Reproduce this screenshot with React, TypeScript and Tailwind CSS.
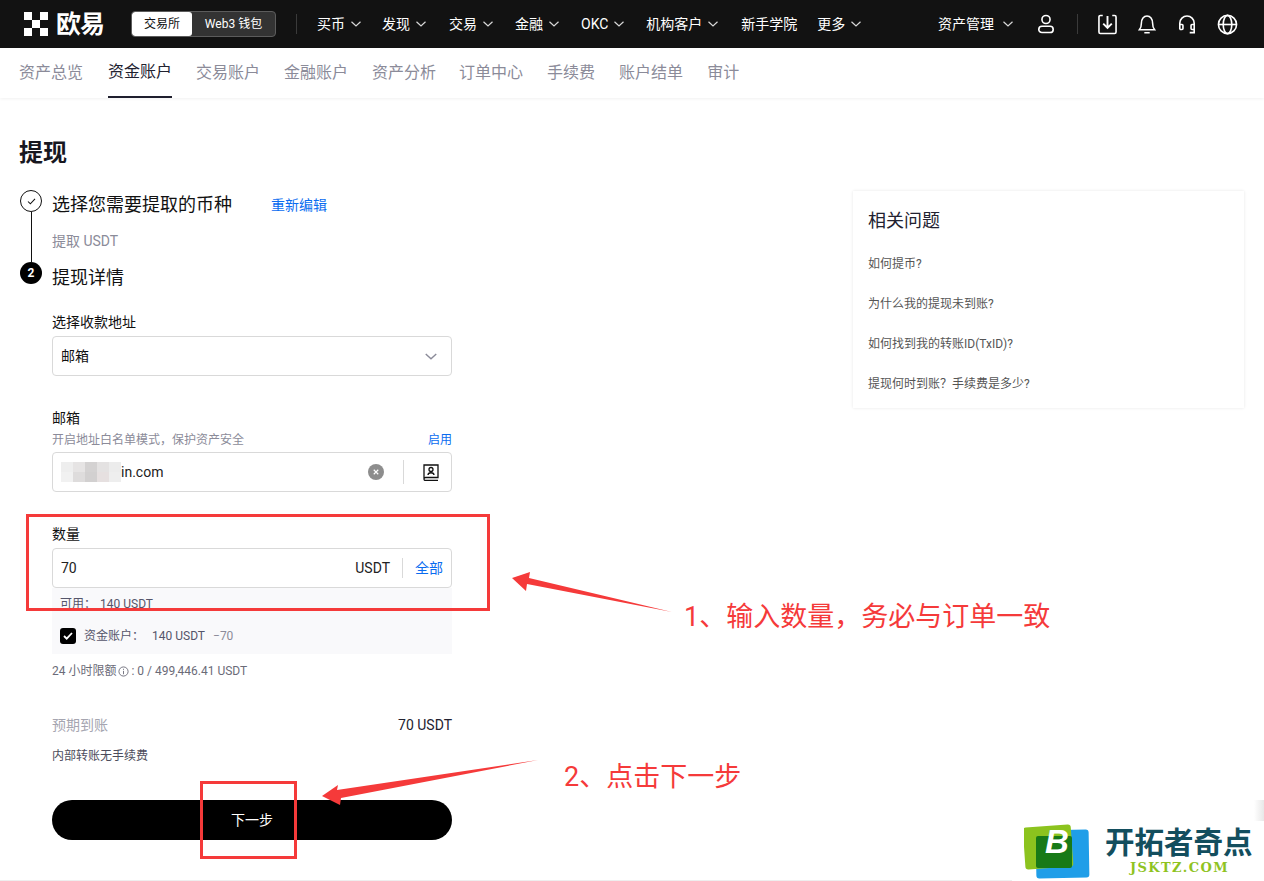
import React from "react";

const FONT = { fontFamily: 'Roboto, "Noto Sans CJK SC", sans-serif' };

function Chevron({ className = "" }: { className?: string }) {
  return (
    <svg viewBox="0 0 10 6" className={className} fill="none" stroke="currentColor" strokeWidth="1.2">
      <path d="M0.5 0.8 5 5 9.5 0.8" />
    </svg>
  );
}

function NavItem({ label, chevron = true, className = "" }: { label: string; chevron?: boolean; className?: string }) {
  return (
    <div className={"flex items-center " + className}>
      <span className="text-[14px] text-white leading-[20px]">{label}</span>
      {chevron && <Chevron className="ml-[6px] w-[10px] h-[6px] text-[#d8d8d8]" />}
    </div>
  );
}

function OkxLogo() {
  return (
    <svg viewBox="0 0 24 24" className="w-[24px] h-[24px]" fill="#fff">
      <rect x="0" y="0" width="8" height="8" />
      <rect x="16" y="0" width="8" height="8" />
      <rect x="8" y="8" width="8" height="8" />
      <rect x="0" y="16" width="8" height="8" />
      <rect x="16" y="16" width="8" height="8" />
    </svg>
  );
}

const tabs = ["资产总览", "资金账户", "交易账户", "金融账户", "资产分析", "订单中心", "手续费", "账户结单", "审计"];
const faqs = ["如何提币?", "为什么我的提现未到账?", "如何找到我的转账ID(TxID)?", "提现何时到账？手续费是多少?"];
const blurCells = [
  "#eee", "#e6e4e4", "#d4d2d2", "#e4e2e2", "#ececec",
  "#f1f1f1", "#dedcdc", "#d2d0d0", "#e6e0e0", "#eeeeee",
];

export default function App() {
  return (
    <div style={FONT} className="relative w-[1264px] h-[881px] overflow-hidden bg-white text-[#111]">
      <header className="h-[48px] bg-[#121212] flex items-center pl-[24px] pr-[26px]">
        <OkxLogo />
        <span className="ml-[8px] text-[25px] font-bold text-white leading-none tracking-[-1px] w-[49px]">欧易</span>
        <div className="ml-[26px] flex h-[26px] w-[145px] rounded-[4px] border border-[#5c5c5c] bg-[#333] text-[12px] overflow-hidden">
          <div className="w-[60px] bg-white text-[#111] rounded-[3px] flex items-center justify-center">交易所</div>
          <div className="flex-1 text-white flex items-center justify-center">Web3 钱包</div>
        </div>
        <div className="ml-[20px] w-px h-[20px] bg-[#3a3a3a]" />
        <nav className="ml-[20px] flex items-center gap-[22px]">
          <NavItem label="买币" />
          <NavItem label="发现" className="-ml-px" />
          <NavItem label="交易" className="ml-px" />
          <NavItem label="金融" />
          <NavItem label="OKC" />
          <NavItem label="机构客户" />
          <NavItem label="新手学院" chevron={false} className="ml-px -mr-[2px]" />
          <NavItem label="更多" />
        </nav>
        <div className="ml-auto flex items-center text-white">
          <span className="text-[14px]">资产管理</span>
          <Chevron className="ml-[9px] w-[10px] h-[6px] text-[#d8d8d8]" />
          <svg viewBox="0 0 20 22" className="ml-[24px] w-[18px] h-[20px]" fill="none" stroke="#fff" strokeWidth="1.8">
            <circle cx="10" cy="6" r="4.5" />
            <rect x="2" y="13.5" width="16" height="7" rx="3.5" />
          </svg>
          <div className="ml-[22px] w-px h-[20px] bg-[#3a3a3a]" />
          <svg viewBox="0 0 20 22" className="ml-[20px] w-[19px] h-[21px]" fill="none" stroke="#fff" strokeWidth="1.7">
            <path d="M5 1.500H2.500A1.500 1.500 0 0 0 1 3v16a1.500 1.500 0 0 0 1.500 1.500h15A1.500 1.500 0 0 0 19 19V3a1.500 1.500 0 0 0-1.500-1.500H15" />
            <path d="M10 2v12M5.500 10l4.500 4.500 4.500-4.500" strokeWidth="2" />
          </svg>
          <svg viewBox="0 0 20 22" className="ml-[21px] w-[18px] h-[22px]" fill="none" stroke="#fff" strokeWidth="1.700">
            <path d="M1.500 17.500h17c-1.800-2-2.300-3.500-2.300-7.500 0-4.500-2.500-8-6.200-8S3.800 5.500 3.800 10c0 4-.5 5.500-2.300 7.500Z" />
            <path d="M7 20.700h6" />
          </svg>
          <svg viewBox="0 0 20 22" className="ml-[22px] w-[18px] h-[21px]" fill="none" stroke="#fff" strokeWidth="1.800">
            <path d="M2 16.500V9.500a8 8 0 0 1 16 0v7" />
            <path d="M2 11h2.500a1 1 0 0 1 1 1v3.500a1 1 0 0 1-1 1H2" />
            <path d="M18 11h-2.500a1 1 0 0 0-1 1v3.500a1 1 0 0 0 1 1H18v3.500h-5" />
          </svg>
          <svg viewBox="0 0 22 22" className="ml-[21px] w-[21px] h-[21px]" fill="none" stroke="#fff" strokeWidth="1.700">
            <circle cx="11" cy="11" r="9.500" />
            <ellipse cx="11" cy="11" rx="4.500" ry="9.500" />
            <path d="M1.500 11h19" />
          </svg>
        </div>
      </header>

      <div className="h-[50px] flex pl-[19px] gap-[24px] bg-white shadow-[0_1px_3px_rgba(0,0,0,0.06)]">
        {tabs.map((t, i) => (
          <div
            key={t}
            className={
              i === 1
                ? "h-[50px] flex items-center text-[16px] text-[#222230] border-b-2 border-[#1f1f2e]"
                : i === 0
                ? "h-[50px] flex items-center text-[16px] text-[#8b8b99] mr-px"
                : i === 4
                ? "h-[50px] flex items-center text-[16px] text-[#8b8b99] -mr-px"
                : "h-[50px] flex items-center text-[16px] text-[#8b8b99]"
            }
          >
            {t}
          </div>
        ))}
      </div>

      <main className="pl-[19px] pt-[39px]">
        <h1 className="text-[24px] leading-[32px] font-bold text-[#17171f]">提现</h1>
        <div className="mt-[21px] flex items-start pl-px">
          <div className="flex flex-col">
            <div className="flex h-[72px]">
              <div className="w-[22px] flex flex-col items-center">
                <div className="w-[22px] h-[22px] shrink-0 rounded-full border border-[#111] flex items-center justify-center">
                  <svg viewBox="0 0 10 8" className="w-[9px] h-[7px]" fill="none" stroke="#111" strokeWidth="1.200">
                    <path d="M1 4l2.700 2.700L9 1" />
                  </svg>
                </div>
                <div className="w-px flex-1 bg-[#111]" />
              </div>
              <div className="ml-[10px]">
                <div className="flex items-center h-[28px]">
                  <span className="text-[18px] text-[#111]">选择您需要提取的币种</span>
                  <span className="ml-[39px] text-[14px] text-[#0a6cf0] mt-[2px]">重新编辑</span>
                </div>
                <div className="mt-[13px] h-[20px] leading-[20px] text-[14px] text-[#8b8b99]">提取 USDT</div>
              </div>
            </div>

            <div className="flex">
              <div className="w-[22px] shrink-0 h-[22px] rounded-full bg-black text-white text-[12px] font-bold flex items-center justify-center">2</div>
              <div className="ml-[10px] w-[400px]">
                <div className="h-[30px] flex items-center text-[18px] text-[#111]">提现详情</div>

                <div className="mt-[20px] h-[20px] leading-[20px] text-[14px] text-[#111]">选择收款地址</div>
                <div className="mt-[4px] h-[40px] rounded-[4px] border border-[#d9d9d9] flex items-center justify-between pl-[8px] pr-[14px]">
                  <span className="text-[14px]">邮箱</span>
                  <Chevron className="w-[12px] h-[7px] text-[#8b8b99]" />
                </div>

                <div className="mt-[32px] h-[20px] leading-[20px] text-[14px] text-[#111]">邮箱</div>
                <div className="mt-[4px] h-[16px] leading-[16px] flex justify-between text-[12px]">
                  <span className="text-[#8b8b99]">开启地址白名单模式，保护资产安全</span>
                  <span className="text-[#0a6cf0]">启用</span>
                </div>
                <div className="mt-[4px] h-[40px] rounded-[4px] border border-[#d9d9d9] flex items-center pl-[8px]">
                  <div className="grid grid-cols-5 w-[60px] h-[20px]">
                    {blurCells.map((c, i) => (
                      <div key={i} style={{ backgroundColor: c }} />
                    ))}
                  </div>
                  <span className="text-[14px] text-[#222]">in.com</span>
                  <div className="ml-auto w-[16px] h-[16px] rounded-full bg-[#8d8d8d] flex items-center justify-center">
                    <svg viewBox="0 0 8 8" className="w-[6px] h-[6px]" stroke="#fff" strokeWidth="1.500">
                      <path d="M1 1l6 6M7 1l-6 6" />
                    </svg>
                  </div>
                  <div className="ml-[19px] w-px h-[24px] bg-[#d9d9d9]" />
                  <svg viewBox="0 0 16 17" className="ml-[19px] mr-[12px] w-[16px] h-[17px]" fill="none" stroke="#111" strokeWidth="1.300">
                    <path d="M1 14.500V1h14v12.500H2.500a1.500 1.500 0 0 0 0 3H15" />
                    <circle cx="8" cy="5.500" r="2" />
                    <path d="M5 11c0-3 6-3 6 0" />
                  </svg>
                </div>

                <div className="mt-[32px] h-[20px] leading-[20px] text-[14px] text-[#111]">数量</div>
                <div className="mt-[4px] h-[40px] rounded-[4px] border border-[#d9d9d9] flex items-center pl-[8px] pr-[8px]">
                  <span className="text-[14px] text-[#222]">70</span>
                  <span className="ml-auto text-[14px] text-[#222]">USDT</span>
                  <div className="ml-[12px] w-px h-[20px] bg-[#d9d9d9]" />
                  <span className="ml-[12px] text-[14px] text-[#0a6cf0]">全部</span>
                </div>

                <div className="h-[66px] bg-[#f9f9fb] text-[12px] text-[#55556a] pl-[8px] pt-[8px]">
                  <div className="h-[16px] leading-[16px]">
                    可用：<span className="ml-[4px]">140 USDT</span>
                  </div>
                  <div className="mt-[16px] h-[16px] flex items-center">
                    <div className="w-[16px] h-[16px] rounded-[3px] bg-black flex items-center justify-center">
                      <svg viewBox="0 0 10 8" className="w-[10px] h-[8px]" fill="none" stroke="#fff" strokeWidth="1.800">
                        <path d="M1 4l2.700 2.700L9 1" />
                      </svg>
                    </div>
                    <span className="ml-[8px]">资金账户：</span>
                    <span className="ml-[8px]">140 USDT</span>
                    <span className="ml-[8px] text-[#8b8b99]">−70</span>
                  </div>
                </div>

                <div className="mt-[9px] h-[16px] flex items-center text-[12px] text-[#6b6b78]">
                  24 小时限额
                  <svg viewBox="0 0 12 12" className="mx-[2px] w-[11px] h-[11px]" fill="none" stroke="#6b6b78" strokeWidth="1">
                    <circle cx="6" cy="6" r="5" />
                    <path d="M6 5.300V9M6 3v1.200" />
                  </svg>
                  : 0 / 499,446.41 USDT
                </div>

                <div className="mt-[36px] h-[20px] flex justify-between items-center text-[14px]">
                  <span className="text-[#a5a5b0]">预期到账</span>
                  <span className="text-[#222230]">70 USDT</span>
                </div>
                <div className="mt-[13px] h-[16px] leading-[16px] text-[12px] text-[#4c4c5c]">内部转账无手续费</div>

                <button className="mt-[36px] w-[400px] h-[40px] rounded-full bg-black text-white text-[14px]">下一步</button>
              </div>
            </div>
          </div>

          <aside className="ml-[401px] mt-px w-[391px] h-[217px] bg-white shadow-[0_0_3px_rgba(0,0,0,0.1)] pl-[15px] pt-[17px]">
            <div className="h-[26px] leading-[26px] text-[18px] text-[#222230]">相关问题</div>
            <div className="mt-[22px] flex flex-col gap-[24px]">
              {faqs.map((q) => (
                <div key={q} className="h-[16px] leading-[16px] text-[12px] text-[#555]">{q}</div>
              ))}
            </div>
          </aside>
        </div>
      </main>

      <div className="absolute left-0 bottom-0 w-full h-px bg-[#eeeeee]" />
      <div className="absolute left-[26px] top-[514px] w-[464px] h-[97px] border-[3px] border-[#f53a3a]" />
      <div className="absolute left-[200px] top-[781px] w-[97px] h-[78px] border-[3px] border-[#f53a3a]" />
      <svg className="absolute left-0 top-0 w-[1264px] h-[881px] pointer-events-none" viewBox="0 0 1264 881">
        <polygon fill="#f53a3a" points="512,578 530,572 529,578 672,612 527,584 526,591" />
        <polygon fill="#f53a3a" points="322,796 338,785 337,790 538,760 341,798 340,805" />
      </svg>
      <div className="absolute left-[684px] top-[599px] h-[36px] leading-[36px] text-[27px] text-[#f53a3a] whitespace-nowrap">1、输入数量，务必与订单一致</div>
      <div className="absolute left-[564px] top-[759px] h-[36px] leading-[36px] text-[27px] text-[#f53a3a] whitespace-nowrap">2、点击下一步</div>

      <div className="absolute left-[1254px] top-[800px] w-[10px] h-[21px] bg-gradient-to-r from-white to-[#e8e8e8]" />
      <div className="absolute left-[1012px] top-[821px] w-[252px] h-[60px] bg-white">
        <svg viewBox="0 0 66 56" className="absolute left-[12px] top-[3px] w-[66px] h-[56px]">
          <rect x="12" y="6" width="53" height="48" rx="3" fill="#1f9ee8" transform="rotate(-1 38 30)" />
          <rect x="0" y="2" width="48" height="42" rx="3" fill="#8cc31e" transform="rotate(-4 24 22)" />
          <rect x="12" y="12" width="36" height="32" rx="2" fill="#187a17" />
        </svg>
        <span className="absolute left-[33px] top-[3px] text-[33px] leading-[36px] font-bold italic text-white" style={{ fontFamily: '"Liberation Sans", sans-serif' }}>B</span>
        <span className="absolute left-[93px] top-[4px] text-[29.5px] leading-[36px] font-bold text-[#134e5e] whitespace-nowrap">开拓者奇点</span>
        <span className="absolute left-[118px] top-[39px] text-[13px] leading-[16px] font-bold tracking-[1.4px] text-[#8fc31f] whitespace-nowrap" style={{ fontFamily: '"DejaVu Serif", serif' }}>JSKTZ.COM</span>
      </div>
    </div>
  );
}
